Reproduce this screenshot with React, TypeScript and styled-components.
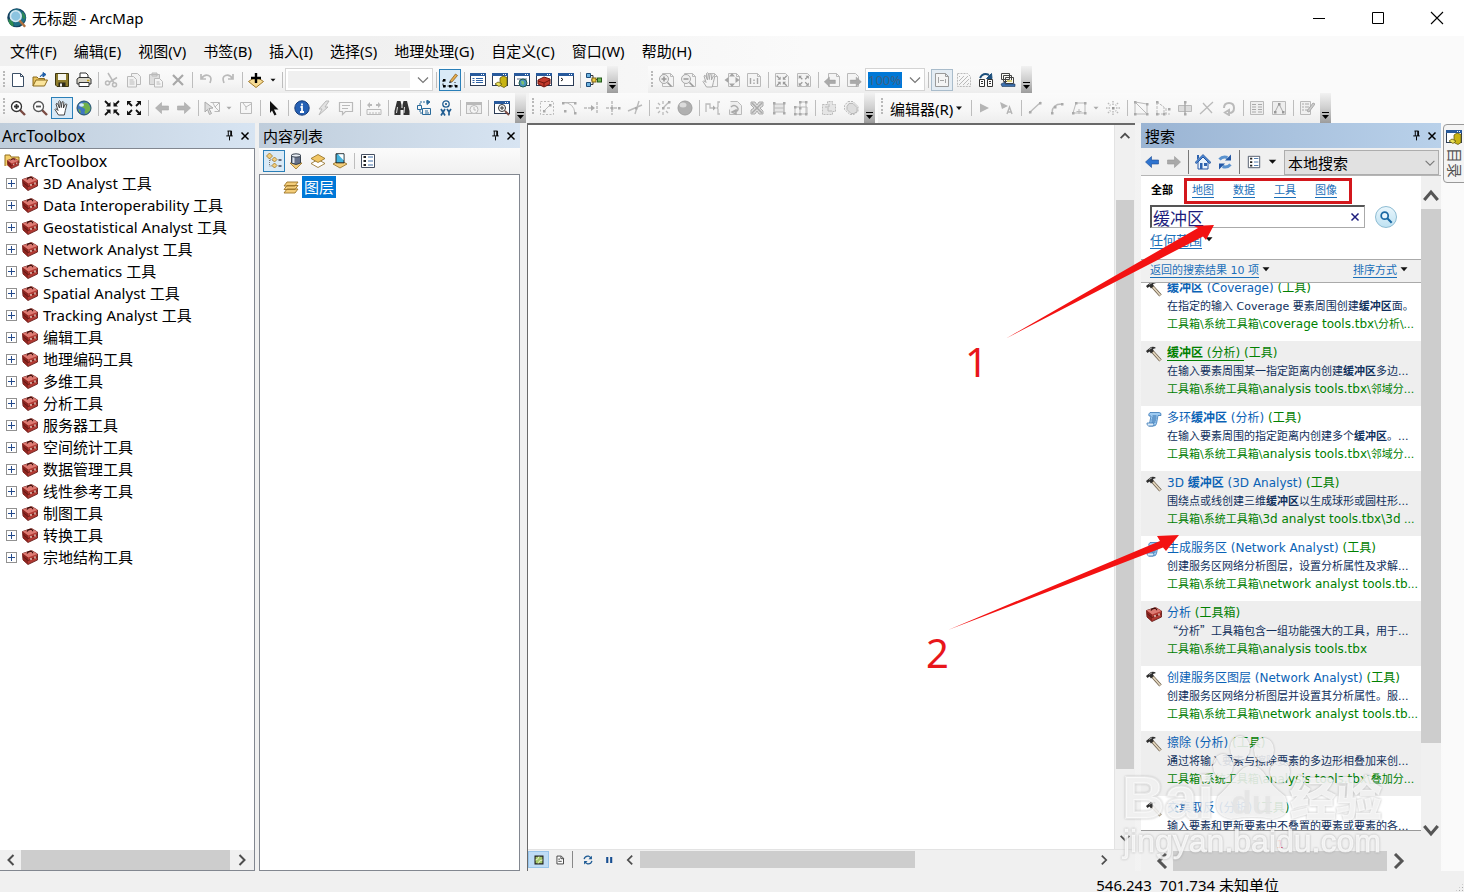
import React from 'react';
import styled, { createGlobalStyle, css } from 'styled-components';

const Global = createGlobalStyle`
  *, *::before, *::after { box-sizing: border-box; }
  body {
    margin: 0;
    background: #f0f0f0;
    color: #000;
    font-family: "Noto Sans", "Noto Sans CJK SC", sans-serif;
    font-size: 15px;
  }
  button, input, select { font: inherit; color: inherit; margin: 0; padding: 0; }
  ul { list-style: none; margin: 0; padding: 0; }
`;

/* ---------- icons ---------- */

const G = '#bababa';
const NAVY = '#1c4f7c';

const wide = (c: string) => (
  <path d="M4.500 1.500h8l3 3v10h-11zM12.500 1.500v3h3" fill="#f4f4f4" stroke={c} />
);
const lens = (c: string, fill: string, handle: string, plus: boolean) => (
  <>
    <path d="M10 10l5 5" stroke={handle} strokeWidth="2.400" />
    <circle cx="6.500" cy="6.500" r="5" fill={fill} stroke={c} strokeWidth="1.300" />
    <path d={plus ? 'M4 6.500h5M6.500 4v5' : 'M4 6.500h5'} stroke={c} strokeWidth="1.800" />
  </>
);
const inward = (c: string) => (
  <>
    <path d="M1 1l4 4M15 1l-4 4M1 15l4-4M15 15l-4-4" stroke={c} strokeWidth="1.800" />
    <path d="M6.500 2v4.500h-4.500zM9.500 2v4.500h4.500zM6.500 14v-4.500h-4.500zM9.500 14v-4.500h4.500z" fill={c} />
  </>
);
const outward = (c: string) => (
  <>
    <path d="M3 3l3 3M13 3l-3 3M3 13l3-3M13 13l-3-3" stroke={c} strokeWidth="1.800" />
    <path d="M1 1h4.500l-4.500 4.500zM15 1h-4.500l4.500 4.500zM1 15h4.500l-4.500-4.500zM15 15h-4.500l4.500-4.500z" fill={c} />
  </>
);
const arrow = (c: string, s: string, left: boolean) => (
  <path
    d={left ? 'M1.500 8l6-5.500v3.500h7v4h-7v3.500z' : 'M14.500 8l-6-5.500v3.500h-7v4h7v3.500z'}
    fill={c}
    stroke={s}
    strokeWidth=".6"
  />
);
const frame = (
  <>
    <rect x=".5" y="1.500" width="15" height="12" fill="#fff" stroke="#2b3b55" />
    <path d="M0 2.500h16" stroke="#285a9c" strokeWidth="3" />
    <path d="M11 2.500h1M13 2.500h1" stroke="#fff" />
  </>
);
const toolboxShape = (
  <>
    <path d="M.5 4.500l9-3 6 3.500v6l-9.500 4.500-5-4.500z" fill="#b23a33" stroke="#5d1713" strokeWidth=".8" />
    <path d="M.5 4.500l9-3 6 3.500-9.500 3.500z" fill="#dd7a72" />
    <path d="M.5 4.500l5.500 4v7l-5-4.500z" fill="#8c241f" />
    <path d="M1 7.500l5 4 9.500-3.800" stroke="#5d1713" strokeWidth=".9" fill="none" />
    <path d="M5 4.500q1-2.500 4.500-2 1.500.5 1 1.800" stroke="#3d0f0c" strokeWidth="1.200" fill="none" />
    <path d="M9 9v2M13 7.500v2" stroke="#f3dcd2" strokeWidth="1.300" />
  </>
);
const diamond = (y: number, f: string) => (
  <path d={`M1 ${y}l7-4 7 4-7 4z`} fill={f} stroke="#8e6b1f" strokeWidth=".8" />
);
const dots = (pts: number[][], c: string) =>
  pts.map(([x, y]) => <rect key={`${x}-${y}`} x={x - 1} y={y - 1} width="2.500" height="2.500" fill={c} />);
const handShape = 'M4.500 15l-3.500-5.500q.5-1.500 2 0l1 1-2-6.500q1-1.500 1.800 0l1.700 4-.8-6.500q1-1.500 1.800 0l.8 6 .8-5.500q1.200-1 1.700.3l-.4 5.700 2-4q1.300-.5 1.400.6l-1.500 5.900-1 4.500z';

const ICONS: Record<string, React.ReactNode> = {
  newDoc: <path d="M2.500 1.500h8l3 3v10h-11zM10.500 1.500v3h3" fill="#fff" stroke="#3c4f66" />,
  open: (
    <>
      <path d="M1 14v-9h4l1.500 1.500h6v2" fill="#e8c15b" stroke="#8a6a1c" />
      <path d="M1 14l3-6h11.500l-3 6z" fill="#fbe59c" stroke="#8a6a1c" />
      <path d="M8 5q1-3 4-2.500M11 .5l3 2-3 2.500z" stroke="#1f5fa8" fill="#1f5fa8" />
    </>
  ),
  save: (
    <>
      <path d="M1.500 1.500h13v13h-11.500l-1.500-1.500z" fill="#8e7c2c" stroke="#3f3811" />
      <path d="M4 2h8v6h-8z" fill="#f6f6ee" />
      <path d="M4.500 10.500h7v4h-7z" fill="#2d2a1a" />
      <path d="M6 11.500h2v3h-2z" fill="#eee" />
    </>
  ),
  print: (
    <>
      <path d="M4 6v-5h6l2 2v3" fill="#fff" stroke="#333" />
      <path d="M1 7l2-1.500h10l2 1.500v5h-14z" fill="#d9d6ca" stroke="#333" />
      <path d="M3 10.500h10v4h-10z" fill="#fff" stroke="#333" />
      <path d="M11 8.500h2.500" stroke="#c5a21a" strokeWidth="1.500" />
    </>
  ),
  cut: (
    <g stroke={G} fill="none" strokeWidth="1.500">
      <path d="M4 1l6 10M13 5.500l-8 5" />
      <circle cx="3.500" cy="11" r="2" />
      <circle cx="10.500" cy="12.800" r="2" />
    </g>
  ),
  copy: (
    <g stroke={G} fill="#f2f2f2">
      <path d="M5.500 1.500h6l3 3v8h-9z" />
      <path d="M1.500 4.500h6l3 3v7.500h-9zM3.500 8h4M3.500 10h5M3.500 12h5" />
    </g>
  ),
  paste: (
    <g stroke={G} fill="#dedede">
      <path d="M1.500 2.500h10v10h-10zM4 1h5v3h-5z" />
      <path d="M6.500 6.500h5l3 3v5.500h-8zM8.500 10h3M8.500 12h4" fill="#f5f5f5" />
    </g>
  ),
  del: <path d="M3 3l10 10M13 3l-10 10" stroke="#a8a8a8" strokeWidth="2.200" />,
  undo: <path d="M3 2v5h5M3.500 6.500q3-4.500 7-3t1.500 7.500" fill="none" stroke={G} strokeWidth="1.700" />,
  redo: <path d="M13 2v5h-5M12.500 6.500q-3-4.500-7-3t-1.500 7.500" fill="none" stroke={G} strokeWidth="1.700" />,
  addData: (
    <>
      <path d="M.5 9.500l7.500-5 7.500 5-7.500 6z" fill="#f7dc94" stroke="#a07829" />
      <path d="M3 6h10M8 1v10" stroke="#000" strokeWidth="2.400" />
    </>
  ),
  editorBar: (
    <>
      <path d="M1 8v6h12v-4" stroke="#222" strokeDasharray="2 1.500" fill="none" />
      {dots([[2, 14], [8, 14], [14, 14], [2, 8]], '#000')}
      <path d="M8 9l5.500-7 2 1.500-5.500 6.500z" fill="#e6ad4d" stroke="#7d5316" strokeWidth=".7" />
      <path d="M7 11l.8-2 2 1.500z" fill="#222" />
    </>
  ),
  toc: (
    <>
      {frame}
      <path d="M2.500 6.500h2M6 6.500h7M2.500 8.500h2M6 8.500h7M2.500 10.500h2M6 10.500h7" stroke="#2e62a5" />
    </>
  ),
  catalog: (
    <>
      {frame}
      <path d="M8 6l3-2 4 1.500v8l-3 2-4-2z" fill="#c9b413" stroke="#665b0c" strokeWidth=".8" />
      <path d="M3 12l3-2 4 2-3 2.500z" fill="#ece35a" stroke="#665b0c" strokeWidth=".8" />
    </>
  ),
  searchWin: (
    <>
      {frame}
      <path d="M3 7h10" stroke="#8f9db0" strokeWidth="1.500" />
      <circle cx="9" cy="11" r="4" fill="#4790bd" stroke="#225b4d" />
      <path d="M7 9q2-1 3 1t-1 3q-2-1-2-4z" fill="#7cc072" />
    </>
  ),
  toolboxWin: (
    <>
      {frame}
      <path d="M2 8l6-3 6 2v5l-6 3-6-3z" fill="#c23a2c" stroke="#70160e" />
      <path d="M2 9l6 2 6-3M8 11v3.500" stroke="#70160e" fill="none" />
    </>
  ),
  python: (
    <>
      {frame}
      <path d="M3 6l2 1.500-2 1.500" stroke="#111" fill="none" />
    </>
  ),
  model: (
    <>
      <path d="M5 3.500h2v4h4M5 12.500h2v-4M5 8h2" stroke="#333" fill="none" />
      <path d="M.5 1.500h4v4h-4zM.5 10.500h4v4h-4z" fill="#6fb3e0" stroke="#1d4d7b" />
      <rect x="6" y="6" width="4" height="4" fill="#f1cc45" stroke="#7d6212" />
      <rect x="11.500" y="6" width="4" height="4" fill="#70b457" stroke="#265c1a" />
    </>
  ),
  pZoomIn: <>{wide(G)}<circle cx="6" cy="7" r="4.500" fill="#eee" stroke="#a8a8a8" /><path d="M3.500 7h5M6 4.500v5M9.500 10.500l4 4" stroke="#999" strokeWidth="1.600" /></>,
  pZoomOut: <>{wide(G)}<circle cx="6" cy="7" r="4.500" fill="#eee" stroke="#a8a8a8" /><path d="M3.500 7h5M9.500 10.500l4 4" stroke="#999" strokeWidth="1.600" /></>,
  pPan: <>{wide(G)}<path d={handShape} fill="#f5f5f5" stroke="#aaa" /></>,
  pFull: <>{wide(G)}<path d="M8 1l3 3.500h-6zM8 15l3-3.500h-6zM.5 8l4-3v6zM15.500 8l-4-3v6z" fill="#a5a5a5" /></>,
  pOne: <><path d="M1.500 1.500h10l3 3v10h-13zM11.500 1.500v3h3" fill="#f4f4f4" stroke={G} /><path d="M4.500 6v6M8 7.500v1.500M8 10.500v1.500M11.500 6v6" stroke="#a5a5a5" strokeWidth="1.400" /></>,
  pIn: <><path d="M1.500 1.500h10l3 3v10h-13z" fill="#f4f4f4" stroke={G} /><g transform="translate(2 3) scale(.72)">{inward('#999')}</g></>,
  pOut: <><path d="M1.500 1.500h10l3 3v10h-13z" fill="#f4f4f4" stroke={G} /><g transform="translate(2 3) scale(.72)">{outward('#999')}</g></>,
  pBack: <>{wide(G)}<g transform="translate(-1 3) scale(.85)">{arrow('#aaa', '#999', true)}</g></>,
  pFwd: <><path d="M1.500 1.500h8l3 3v10h-11z" fill="#f4f4f4" stroke={G} /><g transform="translate(3 3) scale(.85)">{arrow('#aaa', '#999', false)}</g></>,
  draft: <><path d="M1.500 1.500h10l3 3v10h-13zM11.500 1.500v3h3" fill="#f4f4f4" stroke="#9a9a9a" /><path d="M4.500 5v6M11.500 7v4M6 8.500h4" stroke="#a5a5a5" /></>,
  focus: <><path d="M1.500 1.500h10l3 3v10h-13z" fill="none" stroke={G} strokeDasharray="2 1" /><path d="M3 13l9-9M3 9l5-5M3 5l1-1M7 13l6-6M11 13l2-2" stroke={G} /></>,
  layout: (
    <g fill="#fff" stroke={NAVY}>
      <path d="M1.500 7.500h5v7h-5zM9.500 7.500h5v7h-5z" stroke="#333" />
      <path d="M3 9.500h2M3 11.500h2M11 9.500h2M11 11.500h2" stroke="#333" />
      <path d="M2 6q3-6 9-3" fill="none" strokeWidth="2" />
      <path d="M14 6.500h-5.500l5-5z" fill={NAVY} />
    </g>
  ),
  drivenPages: (
    <>
      <path d="M1.500 1.500h8v6h-8zM3.500 3.500h8v6h-8zM5.500 5.500h8v6h-8z" fill="#f9f9f4" stroke="#444" />
      <path d="M7 8h5v2h-5z" fill="#d9cf7e" />
      <path d="M1 12l4-2v2h10v2.500h-13z" fill="#3c70ae" stroke="#1b3757" strokeWidth=".6" />
    </>
  ),
  zoomIn: lens('#333', '#fff', '#7a4a42', true),
  zoomOut: lens('#555', '#fff', '#7a4a42', false),
  pan: <path d={handShape} fill="#fff" stroke="#333" strokeWidth=".9" />,
  globe: (
    <>
      <circle cx="8" cy="8" r="7" fill="#3f76c0" stroke="#1f4f66" />
      <path d="M7 3q4-1.500 6 1.500t1 6q-2 3-5 3.500-1-2 0-3.500t-2.500-3 .5-4.500z" fill="#6fb04a" />
      <path d="M2.500 9q2 0 2.500 4-2.500-1-2.500-4z" fill="#6fb04a" />
      <ellipse cx="5.500" cy="5" rx="2.500" ry="1.800" fill="#d5ecf7" />
    </>
  ),
  fixedIn: inward('#111'),
  fixedOut: outward('#111'),
  back: arrow('#b5b5b5', '#a8a8a8', true),
  fwd: arrow('#b5b5b5', '#a8a8a8', false),
  select: <><path d="M6.500 2.500h9v9h-5M9 3l2 4 4-4M11 7l4 4" fill="none" stroke={G} /><path d="M1 2l8 6-4 .5 2.500 5-2 1-2-5-2.500 2.500z" fill="#ddd" stroke="#aaa" /></>,
  clearSel: <path d="M2.500 2.500h11v11h-11zM5 3l3 4 5-3M8 7v3" fill="none" stroke={G} />,
  pointer: <path d="M4 1l8.500 8.500h-4.500l2.500 5-2 1-2.500-5-2 2.500z" fill="#111" />,
  identify: (
    <>
      <circle cx="8" cy="8" r="7.200" fill="#2560b4" stroke="#163c7a" />
      <path d="M8 3.500v2M6.500 7h1.500v5M6 12h4" stroke="#fff" strokeWidth="1.800" fill="none" />
    </>
  ),
  bolt: <path d="M10 1l-7 8h3l-3 6 9-8h-3l4-6z" fill="#e2e2e2" stroke={G} />,
  popup: <path d="M1.500 2.500h13v9h-7l-3 3v-3h-3zM4 5.500h8M4 8.500h6" fill="none" stroke={G} strokeWidth="1.200" />,
  measure: <><path d="M1 9.500h14v5h-14zM4 14v-2M7 14v-2M10 14v-2M13 14v-2" fill="none" stroke={G} /><path d="M1 5l3-3v2h2v2h-2v2zM15 5l-3-3v2h-2v2h2v2z" fill={G} /></>,
  find: (
    <>
      <path d="M3 1h3.500l1 4v3h1v-3l1-4h3.500l2.500 10v4h-6v-5h-3v5h-6v-4z" fill="#333" />
      <path d="M3.500 7l-1 6M10.500 7l-.5 6" stroke="#ddd" />
    </>
  ),
  route: (
    <g fill="none" stroke="#2a6a9a">
      <path d="M1.500 5.500h4v4h-4zM6.500 8.500h8v6h-8zM9 11h3M9 13h4" />
      <path d="M4 5v-3h7M4 10v3h2" strokeDasharray="2 1" />
      <path d="M11 0l3 2-3 2.500z" fill="#2a6a9a" />
    </g>
  ),
  goXY: (
    <g fill="none" stroke="#225f93">
      <circle cx="8" cy="4" r="3.200" strokeWidth="1.300" />
      <path d="M8 3v2M3 9l4 6.500M7 9l-4 6.500M9 9l2 3 2-3M11 12v3.500" strokeWidth="1.700" />
    </g>
  ),
  time: <><rect x=".5" y="2.500" width="15" height="11" fill="#eee" stroke={G} /><path d="M1 4h14" stroke={G} strokeWidth="2" /><circle cx="8" cy="9.500" r="4" fill="#f5f5f5" stroke={G} /><path d="M8 7v3h2" stroke={G} fill="none" /></>,
  viewer: <>{frame}<circle cx="8" cy="8" r="3.500" fill="#fff" stroke="#333" /><path d="M6 8h4M8 6v4" stroke="#333" /><path d="M11 11l4 4" stroke="#7a4a42" strokeWidth="2" /></>,
  e1: <><rect x="1.500" y="1.500" width="13" height="13" fill="none" stroke={G} strokeDasharray="2 1.500" /><path d="M4 12l7-7" stroke={G} />{dots([[5, 11], [11, 5]], '#aaa')}</>,
  e2: <><path d="M2 2.500q11 0 12 11M2 2.500h12" fill="none" stroke={G} />{dots([[2, 3], [14, 3], [14, 13], [4, 11]], '#aaa')}</>,
  e3: <><path d="M1 8h8M14 2v12" stroke={G} strokeWidth="1.500" strokeDasharray="3 1" /><path d="M8 5l4 3-4 3z" fill="#aaa" /></>,
  e4: <><path d="M1 8h14M7 1v14" stroke={G} strokeWidth="1.500" strokeDasharray="3 1" />{dots([[7, 8], [14, 8]], '#aaa')}</>,
  e5: <><path d="M1 11l14-6M12 1l-4 13" stroke={G} strokeWidth="1.400" />{dots([[9, 8]], '#aaa')}</>,
  e6: <><path d="M8 8l6-6M1 8h3M12 8h3M8 1v3M8 12v3M3 3l2 2M3 13l2-2M13 13l-2-2" stroke={G} strokeWidth="1.300" />{dots([[8, 8], [14, 2]], '#aaa')}</>,
  sphere: <><circle cx="8" cy="8" r="7" fill="#b0b0b0" stroke="#a0a0a0" /><ellipse cx="6" cy="5" rx="3.500" ry="2.500" fill="#dcdcdc" /></>,
  e7: <><path d="M1 12v-8h4v4h5M15 2h-2v5l-1 1 1 1v5h2" fill="none" stroke={G} strokeWidth="1.300" /><path d="M8 5.500l3 2.500-3 2.500z" fill="#aaa" /></>,
  e8: <><path d="M3.500 1.500h7l4 4v9h-12v-5" fill="#eee" stroke={G} /><path d="M4 7q3-3 6 0t-2 5M5 12l4 2v-4z" fill="none" stroke="#aaa" strokeWidth="1.500" /></>,
  e9: <><path d="M2 2h4l2 3 2-3h4v4l-3 2 3 3v3h-4l-2-3-2 3h-4v-4l3-2-3-3z" fill="#ddd" stroke="#aaa" /><path d="M3 3l10 10M13 3l-10 10" stroke="#aaa" strokeWidth="1.500" /></>,
  e10: <><path d="M3 2v12M13 2v12M3 4h10v8h-10zM3 8h10" fill="#e5e5e5" stroke={G} />{dots([[3, 3], [13, 3], [3, 13], [13, 13]], '#aaa')}</>,
  e11: <><path d="M2 7h12v7h-12zM7 2v12M7 2h6v12" fill="none" stroke={G} />{dots([[2, 7], [7, 2], [13, 2], [2, 14], [7, 14], [13, 14], [7, 8]], '#aaa')}</>,
  e12: <><path d="M1.500 4.500h5v-3h5v3h3v7h-3v3h-10z" fill="#e5e5e5" stroke={G} strokeDasharray="2 1" /><path d="M4 7h4v-3M11 11h-4v-3" stroke={G} /></>,
  e13: <><path d="M5 1.500h5l5 5v5l-4 3h-4l-5.500-5v-4z" fill="#eee" stroke={G} strokeDasharray="2 1" /><path d="M6 3.500h4l4 4v4l-3 2h-3l-4-4v-3z" fill="#ddd" stroke={G} /></>,
  editTool: <path d="M3 3.500l9 4.500-9 4.500z" fill="#b5b5b5" />,
  editA: <><path d="M1 2l8 4-6 3z" fill="#b5b5b5" /><path d="M8 14l2.500-7 2.500 7M9 12h3" fill="none" stroke="#b5b5b5" strokeWidth="1.400" /></>,
  line: <><path d="M2 13l12-11" stroke={G} strokeWidth="1.300" />{dots([[3, 12], [13, 3]], '#aaa')}</>,
  arc: <><path d="M3 13q0-9 10-9" fill="none" stroke={G} strokeWidth="1.300" />{dots([[3, 13], [6, 7], [13, 4]], '#aaa')}</>,
  trace: <><path d="M2 13l3-10h9v10zM8 9v5M5.500 11.500h5" fill="none" stroke={G} />{dots([[5, 3], [14, 3], [14, 13], [2, 13]], '#aaa')}</>,
  burst: <><path d="M8 1v4M8 11v4M1 8h4M11 8h4M3 3l2.500 2.500M13 3l-2.500 2.500M3 13l2.500-2.500M13 13l-2.500-2.500" stroke={G} strokeDasharray="1.500 1" strokeWidth="1.500" />{dots([[8, 8]], '#999')}</>,
  v1: <><path d="M2 2v12h12v-10zM2 2l12 12" fill="none" stroke={G} />{dots([[2, 2], [2, 14], [14, 14], [14, 4]], '#aaa')}</>,
  v2: <><path d="M2 2v12h7v-7zM11 8v6h4" fill="none" stroke={G} strokeDasharray="3 1" />{dots([[2, 2], [2, 14], [9, 14], [14, 9]], '#aaa')}</>,
  v3: <><path d="M1.500 5.500h13v6h-13z" fill="#ddd" stroke={G} /><path d="M8 1v14" stroke="#aaa" strokeWidth="1.400" />{dots([[8, 2], [8, 14]], '#aaa')}</>,
  v4: <path d="M1 14l13-12M4 3l9 10" stroke={G} strokeWidth="1.300" />,
  v5: <path d="M3 8q0-5 5-5t5 5-5 5M8 10v5l-4-2.500z" fill="none" stroke={G} strokeWidth="2" />,
  table: <><path d="M1.500 1.500h13v13h-13z" fill="#eee" stroke={G} /><path d="M3 4.500h4M9 4.500h4M3 7h4M9 7h4M3 9.500h4M9 9.500h4M3 12h4M9 12h4" stroke="#aaa" /></>,
  sketch: <><path d="M1.500 1.500h13v13h-13z" fill="#eee" stroke={G} /><path d="M4 12l4-8 4 8" stroke="#aaa" fill="none" />{dots([[4, 12], [8, 4], [12, 12]], '#999')}</>,
  create: <><path d="M1.500 1.500h10v13h-10z" fill="#f0f0f0" stroke={G} /><path d="M3 4h2M6 4h4M3 7h2M6 7h4M3 10h2M6 10h3" stroke="#aaa" /><path d="M8 11l6-8 2 1-6 8z" fill="#ccc" stroke="#aaa" /></>,
  toolbox: toolboxShape,
  toolboxRoot: (
    <>
      <path d="M1 13v-11h5l1 2h8v6" fill="#f4cf6a" stroke="#94701d" />
      <g transform="translate(3 4) scale(.75)">{toolboxShape}</g>
    </>
  ),
  byDraw: (
    <>
      <path d="M3.500 5v8h4M4 7h4" stroke="#777" strokeDasharray="1 1" fill="none" />
      <path d="M3.500 0l3 3-3 3-3-3zM8.500 4l2.500 2.500-2.500 2.500-2.500-2.500zM8.500 10l2.500 2.500-2.500 2.500-2.500-2.500z" fill="#f3cd7a" stroke="#9c7427" strokeWidth=".8" />
      <path d="M12.500 7h3M12.500 13h3" stroke="#445" strokeWidth="1.500" />
    </>
  ),
  bySource: (
    <>
      <path d="M2 10l6 6 6-6z" fill="#f3cd7a" stroke="#9c7427" strokeWidth=".8" />
      <path d="M3.500 2v8q4.500 3 9 0v-8z" fill="#65718a" stroke="#38424f" />
      <path d="M5.500 4v6" stroke="#dde4ed" strokeWidth="2" />
      <ellipse cx="8" cy="2.500" rx="4.500" ry="1.700" fill="#e9eef4" stroke="#38424f" />
    </>
  ),
  byVis: <>{diamond(10.500, '#fff')}{diamond(5.500, '#f1c665')}</>,
  bySel: (
    <>
      {diamond(11, '#f3cd7a')}
      <path d="M4 .8h8v9h-8z" fill="#45b3dd" stroke="#222" />
      <path d="M6 1.300h5.500v6z" fill="#fff" />
    </>
  ),
  options: (
    <>
      <path d="M1.500 1.500h13v13h-13z" fill="#fff" stroke="#444e60" />
      <path d="M3.500 4h2.500M3.500 8h2.500M3.500 12h2.500" stroke="#222" strokeWidth="2" />
      <path d="M8 4h5M8 8h5M8 12h5" stroke="#3e6fa8" />
    </>
  ),
  layers: (
    <path d="M1 14l3-4h11l-3 4zM1 10.500l3-4h11l-3 4zM1 7l3-4h11l-3 4z" fill="#f3cd7a" stroke="#9c7427" strokeWidth=".9" />
  ),
  blueBack: arrow('#2f74cf', '#1b4c96', true),
  grayFwd: arrow('#a9a9a9', '#999', false),
  home: (
    <>
      <path d="M3 8v7h10v-7l-5-5z" fill="#e9f2fc" stroke="#2557a7" />
      <path d="M0 8.500l8-8 8 8-1.500 1-6.500-6.500-6.500 6.500z" fill="#4a86d4" stroke="#1d4a90" strokeWidth=".7" />
      <path d="M5 9h2.500v6h-2.500zM9 9h3v3h-3z" fill="#2d62ae" />
      <path d="M2 1h2v3l-2 2z" fill="#2d62ae" />
    </>
  ),
  refresh: (
    <>
      <path d="M2.500 5.500q3-3.500 8-2M13.500 10.500q-3 3.500-8 2" stroke="#5b93cf" strokeWidth="3" fill="none" />
      <path d="M8 6.500h6v-6zM8 9.500h-6v6z" fill="#2458a5" />
    </>
  ),
  hammer: (
    <>
      <path d="M6 5l8.500 9.500" stroke="#6b5d4a" strokeWidth="3.200" />
      <path d="M7 6l7.500 8.500" stroke="#e2d5bd" strokeWidth="1.800" />
      <path d="M0 5l5-4q3-1 5 1l-3 1 .5 2-2.500 2.500-1.500-2-2 1.500z" fill="#2e2e2e" />
      <path d="M3 3.500l3-1.700" stroke="#aaa" />
    </>
  ),
  script: (
    <>
      <path d="M4 1.500h9q2.500 0 2 3h-3l-1.500 8q-.5 2.500-3 2.500h-4.500l2-10h-2q-1-2 1-3.500z" fill="#9ecbf2" stroke="#3877b5" strokeWidth=".8" />
      <path d="M6.500 5h4M6 7h4.500M5.500 9h4.500M5.500 11h4" stroke="#2d6aa8" />
      <path d="M1 12h6.500q1 2-.5 3h-4.500q-2-1-1.500-3z" fill="#dcecf9" stroke="#3877b5" strokeWidth=".8" />
    </>
  ),
  lens: (
    <>
      <circle cx="6.500" cy="6.500" r="4" fill="#e8f6fd" stroke="#1b69a3" strokeWidth="2" />
      <path d="M9.500 9.500l5 5" stroke="#1b69a3" strokeWidth="2.400" />
    </>
  ),
  app: (
    <>
      <circle cx="7.800" cy="7.800" r="7.600" fill="#12405f" />
      <path d="M2 4q4-5 9-2t4 7q-3 6-9 5.500z" fill="#1f6f86" />
      <path d="M1 9q3 0 4 3t-1 2.500q-3-2-3-5.500zM12 3q3 2 2.500 6l-2-1z" fill="#2f8b50" />
      <circle cx="7" cy="6.500" r="4.300" fill="#8cc4e0" stroke="#d4e8f2" strokeWidth="1.300" />
      <path d="M10 10l4.500 5" stroke="#b0703f" strokeWidth="2" />
    </>
  ),
  dataView: <><path d="M3.500 3.500h9v9h-9z" fill="#a5c969" stroke="#222" strokeWidth="1.300" /><path d="M4 8q3 0 4-4M7 12q1-4 5-4" stroke="#eff6d5" fill="none" /></>,
  pageView: <path d="M4.500 3.500h5l2.500 2.500v6.500h-7.500zM6 7h2M6 9.500h4M9 4v2.500h3" fill="#fff" stroke="#333" />,
  redraw: <><path d="M3.500 7q1-4 5-3.500l3 2M12.500 9q-1 4-5 3.500l-3-2" fill="none" stroke="#1e5b94" strokeWidth="1.400" /><path d="M12.500 3v4h-4zM3.500 13v-4h4z" fill="#1e5b94" /></>,
  pause: <path d="M6 4.500v7M10.500 4.500v7" stroke="#174e91" strokeWidth="2.400" />,
  pin: <path d="M5.500 2.500h5M6.500 2.500v6M9.500 2.500v6M10.500 2.500v6M4 8.500h8M8 9v5" fill="none" stroke="#000" strokeWidth="1.200" />,
  close: <path d="M4 4l8 8M12 4l-8 8" stroke="#000" strokeWidth="1.700" />,
  left: <path d="M10.500 3l-5 5 5 5" fill="none" stroke="#4d4d4d" strokeWidth="2" />,
  right: <path d="M5.500 3l5 5-5 5" fill="none" stroke="#4d4d4d" strokeWidth="2" />,
  up: <path d="M3 10.500l5-5 5 5" fill="none" stroke="#4d4d4d" strokeWidth="2" />,
  down: <path d="M3 5.500l5 5 5-5" fill="none" stroke="#4d4d4d" strokeWidth="2" />,
  bigLeft: <path d="M12 1l-7 7 7 7" fill="none" stroke="#555" strokeWidth="3" />,
  bigRight: <path d="M4 1l7 7-7 7" fill="none" stroke="#555" strokeWidth="3" />,
  bigUp: <path d="M2 11.500l6-7 6 7" fill="none" stroke="#555" strokeWidth="2.800" />,
  bigDown: <path d="M2 4.500l6 7 6-7" fill="none" stroke="#555" strokeWidth="2.800" />,
  chevron: <path d="M3 5.500l5 5 5-5" fill="none" stroke="#777" strokeWidth="1.200" />,
  caret: <path d="M4 6h8l-4 4.500z" fill="#111" />,
  caretOff: <path d="M4 6h8l-4 4.500z" fill="#aaa" />,
  minimize: <path d="M2 8.500h12" stroke="#000" />,
  maximize: <path d="M2.500 2.500h11v11h-11z" fill="none" stroke="#000" />,
  closeWin: <path d="M2 2l12 12M14 2l-12 12" stroke="#000" strokeWidth="1.100" />,
  clear: <path d="M4 4l8 8M12 4l-8 8" stroke="#1c1c7c" strokeWidth="1.700" />,
};

const Svg = styled.svg`
  display: block;
  flex: none;
`;

const Icon = ({ name, size = 16 }: { name: string; size?: number }) => (
  <Svg width={size} height={size} viewBox="0 0 16 16" fill="none" aria-hidden="true">
    {ICONS[name]}
  </Svg>
);

/* ---------- window chrome ---------- */

const Window = styled.div`
  display: flex;
  flex-direction: column;
  height: 100vh;
  min-height: 600px;
  overflow: hidden;
  background: linear-gradient(to right, #f0f0f0, #f0f0f0 25%, #fafafa 55%);
`;

const TitleBar = styled.header`
  display: flex;
  align-items: center;
  gap: 5px;
  height: 36px;
  flex: none;
  padding-left: 7px;
  background: #fff;
`;

const Title = styled.h1`
  flex: 1;
  margin: 0;
  font-size: 15px;
  font-weight: 400;
  line-height: 34px;
`;

const WindowButton = styled.button`
  display: grid;
  place-items: center;
  width: 54px;
  height: 34px;
  border: 0;
  background: none;
`;

const MenuBar = styled.nav`
  display: flex;
  flex: none;
  height: 30px;
  gap: 17px;
  padding-left: 10px;
`;

const MenuItem = styled.button`
  border: 0;
  background: none;
  line-height: 28px;
  white-space: nowrap;
`;

const ToolbarRow = styled.div<{ $gap: number }>`
  display: flex;
  flex: none;
  gap: ${p => p.$gap}px;
`;

const Toolbar = styled.div<{ $tall?: boolean }>`
  display: flex;
  align-items: center;
  height: ${p => (p.$tall ? 30 : 27)}px;
  padding-left: 7px;
  position: relative;
  background: linear-gradient(#fbfbfb, #f6f6f6 60%, #ededed);

  &::before {
    content: "";
    position: absolute;
    left: 3px;
    top: 5px;
    height: 16px;
    border-left: 2px dotted #b9b9b9;
  }
`;

const ToolButton = styled.button<{ $on?: boolean; $dim?: boolean; $narrow?: boolean }>`
  display: grid;
  place-items: center;
  flex: none;
  width: ${p => (p.$narrow ? 12 : 22)}px;
  height: 22px;
  border: 1px solid transparent;
  background: none;
  overflow: hidden;
  ${p => p.$on && css`border-color: #2a7fb8; background: #d9eaf7;`}
  ${p => p.$dim && css`border-color: #a9bccb; background: #e4ecf3;`}
`;

const Separator = styled.span`
  flex: none;
  width: 1px;
  height: 16px;
  margin: 0 2px 0 3px;
  background: #bdbdbd;
`;

const Overflow = styled.button`
  display: grid;
  place-items: end center;
  align-self: stretch;
  width: 11px;
  margin-left: 2px;
  border: 0;
  background: linear-gradient(#f2f2f2, #cfcfcf 50%, #9c9c9c);
`;

const ComboFrame = styled.div<{ $width: number }>`
  display: flex;
  align-items: center;
  position: relative;
  width: ${p => p.$width}px;
  height: 23px;
  padding: 2px;
  border: 1px solid #d4d4d4;
  background: #fff;

  > svg { position: absolute; right: 1px; pointer-events: none; }
`;

const ScaleSelect = styled.select`
  width: 100%;
  height: 17px;
  border: 0;
  appearance: none;
  background: linear-gradient(to right, #f0f0f0 calc(100% - 20px), #fff 0);
`;

const ZoomSelect = styled.select`
  width: 34px;
  height: 16px;
  border: 0;
  appearance: none;
  background: #0078d7;
  color: #3b6285;
  font-size: 13px;
  line-height: 16px;
`;

const EditorMenu = styled.button`
  display: flex;
  align-items: center;
  width: 83px;
  padding-left: 5px;
  border: 0;
  background: none;
  white-space: nowrap;
`;

/* ---------- panels ---------- */

const Workspace = styled.main`
  display: flex;
  flex: 1;
  min-height: 0;
  position: relative;
  background: linear-gradient(to right, #f0f0f0 70%, #fafafa);
`;

const Panel = styled.section<{ $width: number; $gap: number }>`
  display: flex;
  flex-direction: column;
  flex: none;
  width: ${p => p.$width}px;
  margin-right: ${p => p.$gap}px;
  min-height: 0;
`;

const PanelHeader = styled.div<{ $active?: boolean; $first?: boolean }>`
  display: flex;
  align-items: center;
  flex: none;
  height: 25px;
  padding: ${p => (p.$first ? '0 2px' : '0 1px 0 4px')};
  background: ${p =>
    p.$active ? 'linear-gradient(to right, #9ab4d3, #b9d1ea)' : 'linear-gradient(to right, #bfcddb, #d7e4f2)'};
`;

const PanelTitle = styled.h2<{ $large?: boolean }>`
  flex: 1;
  margin: 0;
  font-size: ${p => (p.$large ? 16 : 15)}px;
  font-weight: 400;
  line-height: 24px;
`;

const PanelButton = styled.button`
  display: grid;
  place-items: center;
  width: 16px;
  height: 20px;
  border: 0;
  background: none;
`;

const Box = styled.div<{ $framed?: boolean }>`
  display: flex;
  flex-direction: column;
  flex: 1;
  min-height: 0;
  border: solid #828790;
  border-width: 1px 1px 1px ${p => (p.$framed ? 1 : 0)}px;
  background: #fff;
`;

const PanelTools = styled.div`
  display: flex;
  align-items: center;
  flex: none;
  height: 26px;
  padding-left: 4px;
  background: linear-gradient(#fbfbfb, #f0f0f0);
`;

const Tree = styled.ul`
  flex: 1;
  padding-top: 1px;
`;

const TreeRow = styled.li<{ $root?: boolean }>`
  display: flex;
  align-items: center;
  height: 22px;
  padding-left: ${p => (p.$root ? 4 : 6)}px;
  gap: ${p => (p.$root ? 4 : 5)}px;
  font-size: ${p => (p.$root ? 16 : 15)}px;
  line-height: 22px;
  white-space: nowrap;
`;

const Expander = styled.button`
  flex: none;
  width: 11px;
  height: 11px;
  border: 1px solid #919191;
  background:
    linear-gradient(#234a8c, #234a8c) center / 7px 1px no-repeat,
    linear-gradient(#234a8c, #234a8c) center / 1px 7px no-repeat,
    #fff;
`;

const LayerRow = styled.div`
  display: flex;
  align-items: center;
  gap: 3px;
  padding: 1px 0 0 23px;
`;

const Selected = styled.span`
  padding: 0 2px;
  background: #0078d7;
  color: #fff;
  line-height: 22px;
`;

const ScrollTrack = styled.div<{ $vertical?: boolean; $pad?: number }>`
  display: flex;
  flex-direction: ${p => (p.$vertical ? 'column' : 'row')};
  flex: ${p => (p.$vertical ? 'none' : '0 0 20px')};
  width: ${p => (p.$vertical ? '20px' : 'auto')};
  padding: 0 ${p => p.$pad ?? 0}px;
  background: #f0f0f0;
`;

const ScrollButton = styled.button<{ $size?: number; $low?: boolean }>`
  display: grid;
  place-items: ${p => (p.$low ? 'end' : 'center')} center;
  flex: 0 0 ${p => p.$size ?? 21}px;
  padding-bottom: ${p => (p.$low ? 4 : 0)}px;
  border: 0;
  background: none;
`;

const Space = styled.span<{ $grow: number }>`
  flex: ${p => p.$grow} 1 0;
`;

const Thumb = styled.span<{ $grow: number }>`
  flex: ${p => p.$grow} 1 0;
  background: #cdcdcd;
`;

/* ---------- map ---------- */

const MapPanel = styled.section`
  display: flex;
  flex-direction: column;
  flex: 1;
  min-width: 0;
  margin-right: 6px;
  border: solid #696969;
  border-width: 2px 0 0 1px;
`;

const MapBody = styled.div`
  display: flex;
  flex: 1;
  min-height: 0;
`;

const MapCanvas = styled.div`
  flex: 1;
  border-right: 1px solid #e3e3e3;
  background: #fff;
`;

const MapFooter = styled.div`
  display: flex;
  flex: none;
  height: 22px;
  padding: 1px 0 3px;
  border-top: 1px solid #e3e3e3;
  background: #f0f0f0;
`;

const ViewButton = styled.button<{ $on?: boolean }>`
  display: grid;
  place-items: center;
  width: 21px;
  border: 1px solid ${p => (p.$on ? '#99c5ea' : 'transparent')};
  background: ${p => (p.$on ? '#bfdcf5' : 'none')};
`;

const FooterRule = styled.span`
  margin: 0 4px 0 2px;
  border-left: 1px solid #888;
`;

const FooterScroll = styled.div`
  display: flex;
  flex: 1;
`;

/* ---------- search ---------- */

const SearchTools = styled.div`
  display: flex;
  align-items: center;
  flex: none;
  height: 28px;
  border-bottom: 1px solid #b5b5b5;
  background: #f0f0f0;
`;

const Rule = styled.span`
  flex: none;
  width: 1px;
  height: 24px;
  margin: 0 3px;
  background: #777;
`;

const SourceField = styled.div`
  display: flex;
  align-items: center;
  flex: 1;
  align-self: stretch;
  position: relative;
  margin: 2px 2px 0 4px;

  > svg { position: absolute; right: 2px; pointer-events: none; }
`;

const SourceSelect = styled.select`
  width: 100%;
  height: 25px;
  padding-left: 3px;
  border: 1px solid #adadad;
  appearance: none;
  background: #e1e1e1;
`;

const SearchBody = styled.div`
  display: flex;
  flex: 1;
  min-height: 0;
`;

const SearchMain = styled.div`
  display: flex;
  flex-direction: column;
  flex: 1;
  min-width: 0;
  background: #fff;
  font-family: "DejaVu Sans", "Noto Sans CJK SC", sans-serif;
  font-size: 11px;
`;

const Tabs = styled.nav`
  display: flex;
  gap: 19px;
  flex: none;
  height: 29px;
  padding-left: 10px;
  line-height: 29px;
`;

const CurrentTab = styled.strong`
  color: #000;
`;

const Link = styled.a<{ $size?: number }>`
  color: #1a6fb9;
  font-size: ${p => p.$size ?? 11}px;
  text-decoration: underline;
  text-underline-offset: 3px;
`;

const QueryRow = styled.form`
  display: flex;
  align-items: center;
  flex: none;
  gap: 10px;
  padding-left: 9px;
`;

const QueryField = styled.div`
  display: flex;
  align-items: center;
  width: 215px;
  height: 23px;
  padding-right: 1px;
  border: 1px solid #aaa;
  border-top: 2px solid #555;
  border-left: 2px solid #555;
`;

const QueryInput = styled.input`
  flex: 1;
  min-width: 0;
  height: 20px;
  padding-left: 1px;
  border: 0;
  outline: 0;
  background: none;
  color: #1c1c7c;
  font-size: 17px;
`;

const RoundButton = styled.button`
  display: grid;
  place-items: center;
  width: 22px;
  height: 22px;
  border: 1px solid #8dbcd3;
  border-radius: 50%;
  background: linear-gradient(#e9f6fc, #bfe2f2);
`;

const ExtentRow = styled.div`
  display: flex;
  align-items: center;
  flex: none;
  height: 31px;
  padding: 0 0 9px 9px;
`;

const ResultBar = styled.div`
  display: flex;
  align-items: center;
  justify-content: space-between;
  flex: none;
  height: 24px;
  padding: 0 10px 4px 9px;
  border-top: 1px solid #aaa;
  border-bottom: 1px solid #aaa;
  background: #f0f0f0;
`;

const WithCaret = styled.span`
  display: flex;
  align-items: center;
`;

const Results = styled.div`
  flex: 1;
  min-height: 0;
  overflow: hidden;
  border-bottom: 1px solid #999;
`;

const ResultList = styled.ul`
  margin-top: -7px;
`;

const Result = styled.li`
  display: flex;
  gap: 5px;
  height: 65px;
  padding: 3px 0 0 5px;
  line-height: 18px;
  white-space: nowrap;

  &:nth-child(even) { background: #eeeeee; }
  > svg { margin-top: 2px; }
`;

const ResultText = styled.div`
  flex: 1;
  min-width: 0;
  color: #008000;

  > * {
    display: block;
    overflow: hidden;
    height: 18px;
  }
`;

const ResultTitle = styled.span<{ $hover?: boolean }>`
  && { height: 19px; }
  font-size: 12px;

  a {
    color: ${p => (p.$hover ? '#008000' : '#0a62b5')};
    text-decoration: ${p => (p.$hover ? 'underline' : 'none')};
    text-underline-offset: 3px;
  }
`;

const Description = styled.span`
  color: #10305c;
`;

const FullWidth = styled.span`
  font-family: "Noto Sans CJK SC", sans-serif;
  line-height: 1;
`;

const FileName = styled.span`
  font-size: 12px;
  line-height: 1;
`;

const Pager = styled.div`
  flex: none;
  height: 20px;
  padding-right: 2px;
  background: #f0f0f0;
  color: #d11;
  line-height: 28px;
  text-align: center;
`;

const SideStrip = styled.aside`
  flex: none;
  width: 21px;
  padding-top: 1px;
  background: #fafafa;
`;

const SideTab = styled.button`
  display: flex;
  flex-direction: column;
  align-items: center;
  gap: 3px;
  width: 22px;
  height: 59px;
  padding-top: 4px;
  border: 1px solid #999;
  border-radius: 4px 0 0 4px;
  background: #f4f4f4;
  color: #555;
  line-height: 15px;

  > span { writing-mode: vertical-rl; text-orientation: sideways; }
`;

const StatusBar = styled.footer`
  display: flex;
  justify-content: flex-end;
  flex: none;
  height: 21px;
  padding-right: 185px;
  overflow: hidden;
  background: #f0f0f0;
  line-height: 28px;
  white-space: pre;
  position: relative;
`;

const SizeGrip = styled.span`
  position: absolute;
  right: 0;
  bottom: 0;
  width: 9px;
  height: 9px;
  background: radial-gradient(circle, #aaa 1px, transparent 1px) 0 0 / 3px 3px;
  clip-path: polygon(100% 0, 100% 100%, 0 100%);
`;

/* ---------- annotations over the workspace ---------- */

const Markup = styled.svg`
  position: absolute;
  top: 0;
  right: 0;
  pointer-events: none;
  font-family: "Noto Sans", sans-serif;
`;

const Watermark = styled.svg`
  position: absolute;
  right: 70px;
  bottom: 0;
  pointer-events: none;
  font-family: "Liberation Sans", "Noto Sans CJK SC", sans-serif;
  filter: drop-shadow(0 0 1px rgba(110, 110, 110, 0.6));
`;

/* ---------- data ---------- */

const MENUS = ['文件(F)', '编辑(E)', '视图(V)', '书签(B)', '插入(I)', '选择(S)', '地理处理(G)', '自定义(C)', '窗口(W)', '帮助(H)'];

const TOOLBOXES = [
  '3D Analyst 工具', 'Data Interoperability 工具', 'Geostatistical Analyst 工具', 'Network Analyst 工具',
  'Schematics 工具', 'Spatial Analyst 工具', 'Tracking Analyst 工具', '编辑工具', '地理编码工具', '多维工具',
  '分析工具', '服务器工具', '空间统计工具', '数据管理工具', '线性参考工具', '制图工具', '转换工具', '宗地结构工具',
];

const hit = <b>缓冲区</b>;

interface ResultItem {
  icon: string;
  title: React.ReactNode;
  kind?: string;
  text: React.ReactNode;
  file: string;
  rest?: string;
  hover?: boolean;
}

const RESULTS: ResultItem[] = [
  { icon: 'hammer', title: <>{hit} (Coverage)</>, text: <>在指定的输入 Coverage 要素周围创建{hit}面。</>, file: 'coverage tools.tbx', rest: '\\分析\\...' },
  { icon: 'hammer', title: <>{hit} (分析) </>, text: <>在输入要素周围某一指定距离内创建{hit}多边...</>, file: 'analysis tools.tbx', rest: '\\邻域分...', hover: true },
  { icon: 'script', title: <>多环{hit} (分析)</>, text: <>在输入要素周围的指定距离内创建多个{hit}。...</>, file: 'analysis tools.tbx', rest: '\\邻域分...' },
  { icon: 'hammer', title: <>3D {hit} (3D Analyst)</>, text: <>围绕点或线创建三维{hit}以生成球形或圆柱形...</>, file: '3d analyst tools.tbx\\3d', rest: ' ...' },
  { icon: 'script', title: '生成服务区 (Network Analyst)', text: '创建服务区网络分析图层，设置分析属性及求解...', file: 'network analyst tools.tb', rest: '...' },
  { icon: 'toolbox', title: '分析', kind: '(工具箱)', text: <><FullWidth>“</FullWidth>分析<FullWidth>”</FullWidth>工具箱包含一组功能强大的工具，用于...</>, file: 'analysis tools.tbx' },
  { icon: 'hammer', title: '创建服务区图层 (Network Analyst)', text: '创建服务区网络分析图层并设置其分析属性。服...', file: 'network analyst tools.tb', rest: '...' },
  { icon: 'hammer', title: '擦除 (分析)', text: '通过将输入要素与擦除要素的多边形相叠加来创...', file: 'analysis tools.tbx', rest: '\\叠加分...' },
  { icon: 'hammer', title: '交集取反 (分析)', text: '输入要素和更新要素中不叠置的要素或要素的各...', file: 'analysis tools.tbx', rest: '\\叠加分...' },
];

/* "|" is a divider, "v" and "w" are drop-down arrows (enabled, disabled) */
const Tools = ({ items, on, dim }: { items: string; on?: string; dim?: string }) => (
  <>
    {items.split(' ').map((name, i) => {
      if (name === '|') return <Separator key={i} />;
      if (name === 'v' || name === 'w') {
        return (
          <ToolButton key={i} $narrow aria-label="更多">
            <Icon name={name === 'v' ? 'caret' : 'caretOff'} size={10} />
          </ToolButton>
        );
      }
      return (
        <ToolButton key={i} $on={name === on} $dim={name === dim} aria-label={name}>
          <Icon name={name} />
        </ToolButton>
      );
    })}
  </>
);

const More = () => (
  <Overflow aria-label="工具栏选项">
    <Svg width="9" height="12" viewBox="0 0 9 12">
      <path d="M1 1.500h7" stroke="#000" />
      <path d="M1 4h7l-3.500 4z" fill="#000" />
    </Svg>
  </Overflow>
);

const Header = ({ title, active, first }: { title: string; active?: boolean; first?: boolean }) => (
  <PanelHeader $active={active} $first={first}>
    <PanelTitle $large={first}>{title}</PanelTitle>
    <PanelButton aria-label="自动隐藏"><Icon name="pin" size={13} /></PanelButton>
    <PanelButton aria-label="关闭"><Icon name="close" size={14} /></PanelButton>
  </PanelHeader>
);

export default function App() {
  return (
    <Window>
      <Global />
      <TitleBar>
        <Icon name="app" size={20} />
        <Title>无标题 - ArcMap</Title>
        <WindowButton aria-label="最小化"><Icon name="minimize" /></WindowButton>
        <WindowButton aria-label="最大化"><Icon name="maximize" /></WindowButton>
        <WindowButton aria-label="关闭窗口"><Icon name="closeWin" /></WindowButton>
      </TitleBar>

      <MenuBar>
        {MENUS.map(m => <MenuItem key={m}>{m}</MenuItem>)}
      </MenuBar>

      <ToolbarRow $gap={30}>
        <Toolbar>
          <Tools items="newDoc open save print | cut copy paste del | undo redo | addData v |" />
          <ComboFrame $width={148}>
            <ScaleSelect aria-label="比例" defaultValue=""><option value="" /></ScaleSelect>
            <Icon name="chevron" />
          </ComboFrame>
          <Tools items="| editorBar | toc catalog searchWin toolboxWin python | model" on="editorBar" />
          <More />
        </Toolbar>
        <Toolbar>
          <Tools items="pZoomIn pZoomOut pPan pFull pOne | pIn pOut | pBack pFwd" />
          <ComboFrame $width={60}>
            <ZoomSelect aria-label="缩放"><option>100%</option></ZoomSelect>
            <Icon name="chevron" />
          </ComboFrame>
          <Tools items="| draft focus layout drivenPages" dim="draft" />
          <More />
        </Toolbar>
      </ToolbarRow>

      <ToolbarRow $gap={3}>
        <Toolbar $tall>
          <Tools
            items="zoomIn zoomOut pan globe | fixedIn fixedOut | back fwd | select w clearSel | pointer | identify bolt popup | measure | find route goXY | time | viewer"
            on="pan"
          />
          <More />
        </Toolbar>
        <Toolbar $tall>
          <Tools items="e1 e2 e3 e4 e5 | e6 sphere | e7 e8 e9 e10 e11 | e12 e13" />
          <More />
        </Toolbar>
        <Toolbar $tall>
          <EditorMenu>编辑器(R)<Icon name="caret" size={12} /></EditorMenu>
          <Tools items="| editTool editA | line arc trace w burst | v1 v2 v3 v4 v5 | table sketch | create" />
          <More />
        </Toolbar>
      </ToolbarRow>

      <Workspace>
        <Panel $width={255} $gap={4}>
          <Header title="ArcToolbox" first />
          <Box>
            <Tree>
              <TreeRow $root><Icon name="toolboxRoot" />ArcToolbox</TreeRow>
              {TOOLBOXES.map(t => (
                <TreeRow key={t}>
                  <Expander aria-label={`展开 ${t}`} />
                  <Icon name="toolbox" />
                  {t}
                </TreeRow>
              ))}
            </Tree>
            <ScrollTrack>
              <ScrollButton aria-label="向左"><Icon name="left" /></ScrollButton>
              <Thumb $grow={1} />
              <ScrollButton $size={24} aria-label="向右"><Icon name="right" /></ScrollButton>
            </ScrollTrack>
          </Box>
        </Panel>

        <Panel $width={261} $gap={7}>
          <Header title="内容列表" />
          <PanelTools>
            <Tools items="byDraw bySource byVis bySel | options" on="byDraw" />
          </PanelTools>
          <Box $framed>
            <LayerRow><Icon name="layers" /><Selected>图层</Selected></LayerRow>
          </Box>
        </Panel>

        <MapPanel>
          <MapBody>
            <MapCanvas />
            <ScrollTrack $vertical $pad={1}>
              <ScrollButton $size={22} aria-label="向上"><Icon name="up" size={14} /></ScrollButton>
              <Space $grow={53} />
              <Thumb $grow={571} />
              <Space $grow={58} />
              <ScrollButton $size={22} aria-label="向下"><Icon name="down" size={14} /></ScrollButton>
            </ScrollTrack>
          </MapBody>
          <MapFooter>
            <ViewButton $on aria-label="数据视图"><Icon name="dataView" size={14} /></ViewButton>
            <ViewButton aria-label="布局视图"><Icon name="pageView" size={14} /></ViewButton>
            <FooterRule />
            <ViewButton aria-label="刷新"><Icon name="redraw" size={14} /></ViewButton>
            <ViewButton aria-label="暂停绘制"><Icon name="pause" size={14} /></ViewButton>
            <FooterScroll>
              <ScrollButton aria-label="向左"><Icon name="left" size={14} /></ScrollButton>
              <Thumb $grow={274} />
              <Space $grow={178} />
              <ScrollButton aria-label="向右"><Icon name="right" size={14} /></ScrollButton>
              <ScrollButton aria-hidden="true" />
            </FooterScroll>
          </MapFooter>
        </MapPanel>

        <Panel $width={300} $gap={2}>
          <Header title="搜索" active />
          <SearchTools>
            <Tools items="blueBack grayFwd" />
            <Rule />
            <Tools items="home refresh" />
            <Rule />
            <ToolButton aria-label="选项"><Icon name="options" size={14} /></ToolButton>
            <Icon name="caret" size={15} />
            <SourceField>
              <SourceSelect aria-label="搜索来源"><option>本地搜索</option></SourceSelect>
              <Icon name="chevron" size={14} />
            </SourceField>
          </SearchTools>
          <SearchBody>
            <SearchMain>
              <Tabs>
                <CurrentTab>全部</CurrentTab>
                {['地图', '数据', '工具', '图像'].map(t => <Link key={t} href="#">{t}</Link>)}
              </Tabs>
              <QueryRow onSubmit={e => e.preventDefault()}>
                <QueryField>
                  <QueryInput aria-label="搜索内容" defaultValue="缓冲区" />
                  <PanelButton type="button" aria-label="清除"><Icon name="clear" size={14} /></PanelButton>
                </QueryField>
                <RoundButton aria-label="搜索"><Icon name="lens" size={14} /></RoundButton>
              </QueryRow>
              <ExtentRow>
                <Link href="#" $size={13}>任何范围</Link>
                <Icon name="caret" size={14} />
              </ExtentRow>
              <ResultBar>
                <WithCaret><Link href="#">返回的搜索结果 10 项</Link><Icon name="caret" size={14} /></WithCaret>
                <WithCaret><Link href="#">排序方式</Link><Icon name="caret" size={14} /></WithCaret>
              </ResultBar>
              <Results>
                <ResultList>
                  {RESULTS.map((r, i) => (
                    <Result key={i}>
                      <Icon name={r.icon} />
                      <ResultText>
                        <ResultTitle $hover={r.hover}>
                          <a href="#">{r.title}</a>{r.hover ? '' : ' '}{r.kind ?? '(工具)'}
                        </ResultTitle>
                        <Description>{r.text}</Description>
                        <span>工具箱\系统工具箱\<FileName>{r.file}</FileName>{r.rest}</span>
                      </ResultText>
                    </Result>
                  ))}
                </ResultList>
              </Results>
              <Pager>1</Pager>
              <ScrollTrack $pad={10}>
                <ScrollButton $size={22} aria-label="向左"><Icon name="bigLeft" /></ScrollButton>
                <Thumb $grow={1} />
                <ScrollButton $size={24} aria-label="向右"><Icon name="bigRight" /></ScrollButton>
              </ScrollTrack>
            </SearchMain>
            <ScrollTrack $vertical>
              <ScrollButton $size={33} $low aria-label="向上"><Icon name="bigUp" size={18} /></ScrollButton>
              <Thumb $grow={533} />
              <Space $grow={74} />
              <ScrollButton $size={26} aria-label="向下"><Icon name="bigDown" size={18} /></ScrollButton>
              <ScrollButton $size={28} aria-hidden="true" />
            </ScrollTrack>
          </SearchBody>
        </Panel>

        <SideStrip>
          <SideTab><Icon name="catalog" /><span>目录</span></SideTab>
        </SideStrip>

        <Markup width="540" height="620" viewBox="924 123 540 620">
          <rect x="1185.500" y="179.500" width="165" height="23" fill="none" stroke="#d3171c" strokeWidth="3" />
          <path d="M1006 338.500L1198 228L1194 226L1214 225L1206 240L1203 236.500Z" fill="#f31212" />
          <path d="M948 630L1160 541L1157 536L1179 535L1166 551L1163 547.500Z" fill="#f31212" />
          <text x="965" y="377" fontSize="40" fill="#e8161b">1</text>
          <text x="926" y="668" fontSize="40" fill="#e8161b">2</text>
        </Markup>

        <Watermark width="280" height="146" viewBox="1114 725 280 146">
          <g fill="#fff" fillOpacity=".8">
            <ellipse cx="1223" cy="766" rx="10" ry="12" />
            <ellipse cx="1240" cy="748" rx="10" ry="12" />
            <ellipse cx="1264" cy="750" rx="10" ry="12" />
            <ellipse cx="1280" cy="772" rx="10" ry="11" />
            <path d="M1252 766q8 0 14 10t19 20q8 20-12 23-21-4-42 0-20-4-13-23 9-8 18-20t16-10z" />
            <text x="1122" y="818" fontSize="59" fontWeight="700" stroke="#fff" strokeOpacity=".5" strokeWidth="2">Bai</text>
            <text x="1231" y="814" fontSize="34" fontWeight="700" fill="#e4e4e4">du</text>
            <text x="1290" y="815" fontSize="46" fontWeight="900" stroke="#fff" strokeOpacity=".5">经验</text>
            <text x="1123" y="852" fontSize="32" stroke="#fff" strokeOpacity=".6">jingyan.baidu.com</text>
          </g>
        </Watermark>
      </Workspace>

      <StatusBar>
        546.243{'  '}701.734 未知单位
        <SizeGrip />
      </StatusBar>
    </Window>
  );
}
